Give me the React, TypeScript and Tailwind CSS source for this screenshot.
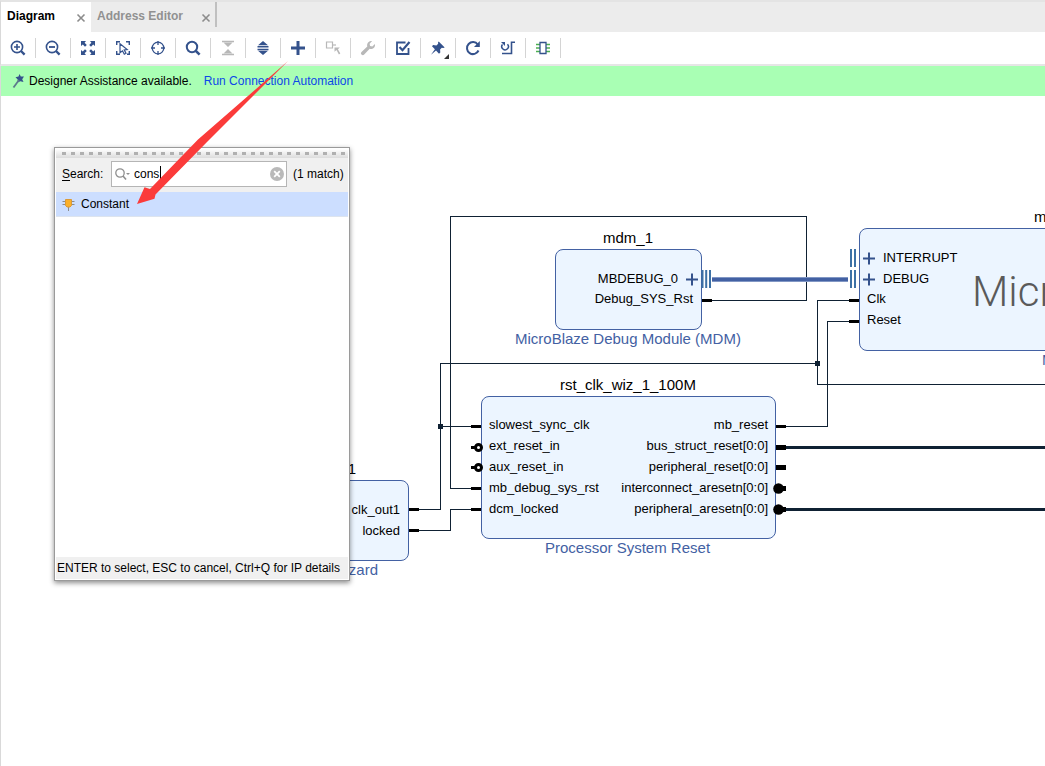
import React from "react";

type IconProps = { children: React.ReactNode };

function Glyph({ children }: IconProps) {
  return (
    <svg width="16" height="16" viewBox="0 0 16 16" fill="none" stroke="currentColor" strokeWidth="2" aria-hidden="true">
      {children}
    </svg>
  );
}

type Tool = { label: string; icon: React.ReactNode; muted?: boolean; menu?: boolean };

const tools: Tool[] = [
  {
    label: "Zoom In",
    icon: (
      <Glyph>
        <circle cx="7" cy="7" r="5.6" strokeWidth="1.6" />
        <path d="M11 11l3.6 3.6" strokeWidth="2.4" />
        <path d="M4 7h6M7 4v6" strokeWidth="1.6" />
      </Glyph>
    ),
  },
  {
    label: "Zoom Out",
    icon: (
      <Glyph>
        <circle cx="7" cy="7" r="5.6" strokeWidth="1.6" />
        <path d="M11 11l3.6 3.6" strokeWidth="2.4" />
        <path d="M4 7h6" strokeWidth="1.8" />
      </Glyph>
    ),
  },
  {
    label: "Zoom Fit",
    icon: (
      <Glyph>
        <path d="M1 1h5L4.6 2.8 6.8 5 5 6.8 2.8 4.6 1 6zM15 1v5l-1.8-1.400L11 6.800 9.200 5l2.200-2.200L10 1zM1 15v-5l1.800 1.400L5 9.200 6.800 11l-2.200 2.200L6 15zM15 15h-5l1.400-1.800L9.200 11 11 9.200l2.200 2.200L15 10z" fill="currentColor" stroke="none" />
      </Glyph>
    ),
  },
  {
    label: "Select Area",
    icon: (
      <Glyph>
        <path d="M1.700 5V1.700H5M11 1.700h3.300V5M1.700 11v3.300H5M14.300 11v3.300H12" strokeWidth="1.4" />
        <path d="M5 3.800l7.200 5.700-3 .4 1.800 3.400-1.700.9-1.800-3.400L5 12.800z" strokeWidth="1.200" />
      </Glyph>
    ),
  },
  {
    label: "Center",
    icon: (
      <Glyph>
        <circle cx="8" cy="8" r="5.800" strokeWidth="1.3" />
        <path d="M8 1v4M8 11v4M1 8h4M11 8h4" strokeWidth="1.300" />
      </Glyph>
    ),
  },
  {
    label: "Search",
    icon: (
      <Glyph>
        <circle cx="7" cy="7" r="5.200" />
        <path d="M10.800 10.800l3.800 3.800" strokeWidth="2.600" />
      </Glyph>
    ),
  },
  {
    label: "Collapse All",
    muted: true,
    icon: (
      <Glyph>
        <path d="M2 1.500h12M2 14.500h12" strokeWidth="1.400" />
        <path d="M3.500 2.500h9L8 7zM3.500 13.500h9L8 9z" fill="currentColor" stroke="none" />
      </Glyph>
    ),
  },
  {
    label: "Expand All",
    icon: (
      <Glyph>
        <path d="M3 5.200l5-4.200L13 5.200zM3 10.800l5 4.200L13 10.800z" fill="currentColor" stroke="none" />
        <path d="M2.500 6.800h11M2.500 9.500h11" strokeWidth="1.600" />
      </Glyph>
    ),
  },
  {
    label: "Add IP",
    icon: (
      <Glyph>
        <path d="M1 8h14M8 1v14" strokeWidth="3" />
      </Glyph>
    ),
  },
  {
    label: "Make External",
    muted: true,
    icon: (
      <Glyph>
        <path d="M1.500 2h6v6h-6z" strokeWidth="1.200" />
        <path d="M8 5h3" strokeWidth="1.200" />
        <path d="M9.500 7.500h5.300l-1.900 1.700 2.400 4.300-1.400.9-2.400-4.400-2 1.700z" fill="currentColor" stroke="none" />
      </Glyph>
    ),
  },
  {
    label: "Customize Block",
    muted: true,
    icon: (
      <Glyph>
        <path d="M14.900 3.900l-2.600 2.500-2.200-.5-.5-2.200 2.500-2.600C10 .5 7.700 2 7.200 4.200c-.2.800-.1 1.500.1 2.200L1.500 11.900c-.8.800-.8 2 0 2.700.8.800 2 .8 2.700 0l5.500-5.800c.7.200 1.400.3 2.200.1C14.100 8.400 15.500 6.100 14.900 3.900z" fill="currentColor" stroke="none" />
      </Glyph>
    ),
  },
  {
    label: "Validate Design",
    icon: (
      <Glyph>
        <path d="M10.500 2.500h-8.500v11.500h11.500v-6" strokeWidth="1.800" />
        <path d="M4.500 7l3 3.200L14.500 2" strokeWidth="2.200" />
      </Glyph>
    ),
  },
  {
    label: "Pin",
    menu: true,
    icon: (
      <Glyph>
        <path d="M8.700 1.500l6 6-1.500.6-1.400-.4-1.700 1.900.2 3-1.300 1.100-3-3.200L1 14.800l3.900-5.600L2 6.300l1.100-1.200 3.300.3L8.200 3.800 8 2.500z" fill="currentColor" stroke="none" />
      </Glyph>
    ),
  },
  {
    label: "Regenerate Layout",
    icon: (
      <Glyph>
        <path d="M12.800 4.500A6 6 0 1 0 13.500 10.500" strokeWidth="2" />
        <path d="M14.800 1v6H9z" fill="currentColor" stroke="none" />
      </Glyph>
    ),
  },
  {
    label: "Optimize Routing",
    icon: (
      <Glyph>
        <path d="M15 2.200h-3.500v11.300H2" strokeWidth="1.600" />
        <path d="M2.500 4.500a3.300 3.300 0 1 0 5-.2" strokeWidth="1.500" />
        <path d="M1 2h4v4z" fill="currentColor" stroke="none" />
      </Glyph>
    ),
  },
  {
    label: "Default View",
    icon: (
      <Glyph>
        <path d="M1 4.500h4M1 8h4M1 11.500h4M11 4.500h4M11 8h4M11 11.500h4" stroke="#4caf50" strokeWidth="1.500" />
        <path d="M5 2.500h6v11H5z" strokeWidth="1.300" />
      </Glyph>
    ),
  },
];

function Tab({ title, active }: { title: string; active?: boolean }) {
  return (
    <div className={active ? "flex w-[90px] items-center justify-between bg-white pl-1.5 pr-[5px]" : "flex w-[124px] items-center justify-between pl-1.5 pr-1"}>
      <button type="button" className={active ? "pb-0.5 font-bold text-black" : "pb-0.5 font-bold text-[#919191]"}>
        {title}
      </button>
      <button type="button" aria-label={`Close ${title}`} className="pt-0.5 text-[#8c8c8c]">
        <svg width="10" height="10" viewBox="0 0 10 10" stroke="currentColor" strokeWidth="1.600" aria-hidden="true">
          <path d="M1.500 1.500l7 7M8.500 1.500l-7 7" />
        </svg>
      </button>
    </div>
  );
}

function SearchPopup() {
  return (
    <section className="absolute left-[54px] top-[51px] flex h-[434px] w-[296px] flex-col border border-[#9a9a9a] bg-white p-px text-[12px] shadow-[0_2px_5px_rgba(0,0,0,0.45)]">
      <div className="flex h-[9px] items-center bg-gradient-to-b from-white to-[#dcdcdc] pl-1.5">
        <svg className="w-full" height="3" aria-hidden="true">
          <path d="M0 1.500H286" stroke="#b0b0b0" strokeWidth="3" strokeDasharray="4 5" />
        </svg>
      </div>
      <div className="flex h-[34px] items-center bg-[#f0f0f0] pb-0.5 pl-1.5 pr-1">
        <label htmlFor="ip-search" className="w-[49px]">
          <span className="underline underline-offset-2">S</span>earch:
        </label>
        <div className="flex h-[26px] w-[176px] items-center border border-[#b5b5b5] bg-white pl-[3px] pr-0.5">
          <svg width="17" height="14" viewBox="0 0 17 14" fill="none" stroke="#8f8f8f" strokeWidth="1.300" aria-hidden="true">
            <circle cx="5" cy="6" r="4.200" />
            <path d="M8 9l3 3.500" strokeWidth="1.600" />
            <path d="M11 6h4l-2 2z" fill="#8f8f8f" stroke="none" />
          </svg>
          <input id="ip-search" defaultValue="cons" className="w-7 bg-transparent pl-0.5 outline-none" />
          <span className="h-4 w-px bg-black" />
          <button type="button" aria-label="Clear search" className="ml-auto">
            <svg width="14" height="14" viewBox="0 0 14 14" aria-hidden="true">
              <circle cx="7" cy="7" r="7" fill="#b9b9b9" />
              <path d="M4.200 4.200l5.600 5.600M9.800 4.200L4.200 9.800" stroke="#fff" strokeWidth="1.800" />
            </svg>
          </button>
        </div>
        <span className="ml-1.5 whitespace-nowrap">(1 match)</span>
      </div>
      <ul className="flex-1">
        <li>
          <button type="button" className="flex h-[25px] w-full items-center gap-1.5 border-b border-[#dde4ee] bg-[#ccdeff] pl-1.5 text-left">
            <svg width="13" height="13" viewBox="0 0 13 13" fill="none" stroke="#8c8c8c" aria-hidden="true">
              <path d="M0.500 3.500h12M0.500 6.500h12M6.500 9v4" />
              <path d="M3.500 1.500h6v6l-1.500 1.500h-3l-1.500-1.500z" fill="#fbb02a" stroke="#d99a3a" />
            </svg>
            Constant
          </button>
        </li>
      </ul>
      <p className="h-[22px] whitespace-nowrap bg-[#f0f0f0] pl-px leading-[22px]">ENTER to select, ESC to cancel, Ctrl+Q for IP details</p>
    </section>
  );
}

const block = "absolute rounded-[8px] border border-[#4361a3] bg-[#ecf5ff]";
const blockName = "absolute whitespace-nowrap text-[15px] leading-[18px] text-black";
const blockKind = "absolute whitespace-nowrap text-[15px] leading-[18px] text-[#4361a3]";

function Ports({ names, className }: { names: string[]; className: string }) {
  return (
    <ul className={className}>
      {names.map((name) => (
        <li key={name} className="h-[21px] whitespace-nowrap leading-[21px]">
          {name}
        </li>
      ))}
    </ul>
  );
}

function Canvas() {
  return (
    <main className="relative min-h-[670px] flex-1 overflow-hidden bg-white text-[13px] text-black shadow-[inset_1px_0_0_#d9d9d9]">
      <div className={`${block} left-[300px] top-[384px] h-[81px] w-[109px]`}>
        <Ports names={["clk_out1", "locked"]} className="pr-2 pt-[18px] text-right" />
      </div>
      <span className={`${blockName} right-[calc(100%-356px)] top-[364px]`}>clk_wiz_1</span>
      <span className={`${blockKind} right-[calc(100%-378px)] top-[465px]`}>Clocking Wizard</span>

      <span className={`${blockName} left-[603px] top-[133px]`}>mdm_1</span>
      <div className={`${block} left-[555px] top-[153px] h-[81px] w-[147px]`}>
        <ul className="pt-[18px] text-right">
          <li className="h-5 pr-[23px] leading-[21px]">MBDEBUG_0</li>
          <li className="h-5 pr-2 leading-[21px]">Debug_SYS_Rst</li>
        </ul>
      </div>
      <span className={`${blockKind} left-[515px] top-[234px]`}>MicroBlaze Debug Module (MDM)</span>

      <span className={`${blockName} left-[560px] top-[280px]`}>rst_clk_wiz_1_100M</span>
      <div className={`${block} left-[481px] top-[300px] flex h-[143px] w-[295px] justify-between px-[7px] pt-[17px]`}>
        <Ports names={["slowest_sync_clk", "ext_reset_in", "aux_reset_in", "mb_debug_sys_rst", "dcm_locked"]} className="" />
        <Ports
          names={["mb_reset", "bus_struct_reset[0:0]", "peripheral_reset[0:0]", "interconnect_aresetn[0:0]", "peripheral_aresetn[0:0]"]}
          className="text-right"
        />
      </div>
      <span className={`${blockKind} left-[545px] top-[443px]`}>Processor System Reset</span>

      <span className={`${blockName} left-[1034px] top-[112px]`}>microblaze_0</span>
      <div className={`${block} left-[859px] top-[132px] h-[123px] w-[370px]`}>
        <Ports names={["INTERRUPT", "DEBUG"]} className="pl-[23px] pt-[18px]" />
        <Ports names={["Clk", "Reset"]} className="-mt-px pl-[7px]" />
        <span className="absolute left-[112px] top-[38px] font-['Roboto'] text-[42px] font-light leading-[50px] text-[#5a5a5a]">MicroBlaze</span>
      </div>
      <span className={`${blockKind} left-[1042px] top-[255px]`}>MicroBlaze</span>

      <svg className="absolute left-0 top-0" width="1600" height="670" viewBox="0 96 1600 670" fill="none" aria-hidden="true">
        <g stroke="#0f2133" shapeRendering="crispEdges">
          <path d="M481 488.500H450.500V216.500H806.500V300.500H702" />
          <path d="M409 509.500H440.500V363.500H817.500M440.500 426.500H481" />
          <path d="M409 530.500H450.500V509.500H481" />
          <path d="M859 300.500H817.500V384.500H1600" />
          <path d="M776 426.500H827.500V321.500H859" />
          <path d="M776 447.500H1600M776 509.500H1600" strokeWidth="3" />
        </g>
        <path d="M438 424h5v5h-5zM815 361h5v5h-5z" fill="#0f2133" />
        <path d="M712 279.500h136" stroke="#8197c4" strokeWidth="5" />
        <path d="M712 279.500h136" stroke="#4361a3" strokeWidth="3" />
        <path d="M702.500 270v18M706.200 270v18M710 270v18M851 249v18M855 249v18M851 270v18M855 270v18" stroke="#3d71a5" strokeWidth="2" />
        <path d="M686 279.500h12M692 273.500v12M863 258.500h12M869 252.500v12M863 279.500h12M869 273.500v12" stroke="#34528c" strokeWidth="2" />
        <g stroke="#000" strokeWidth="3">
          <path d="M702 300.500h10M849 300.500h10M849 321.500h10M409 509.500h10M409 530.500h10M471 426.500h10M471 488.500h10M471 509.500h10M776 426.500h10" />
          <path d="M776 447.500h10M776 467.500h10M776 488.500h10M776 509.500h10" strokeWidth="5" />
          <path d="M471 447.500h5M471 467.500h5" />
        </g>
        <g stroke="#000" strokeWidth="3" fill="#fff">
          <circle cx="478.500" cy="447.500" r="3" />
          <circle cx="478.500" cy="467.500" r="3" />
        </g>
        <circle cx="778.500" cy="488.500" r="5.300" fill="#000" />
        <circle cx="778.500" cy="509.500" r="5.300" fill="#000" />
      </svg>

      <SearchPopup />
    </main>
  );
}

export default function App() {
  return (
    <div className="relative flex min-h-screen flex-col overflow-hidden bg-white font-['Liberation_Sans',sans-serif] text-[12px] text-black">
      <nav className="flex h-8 border-l border-t-2 border-l-[#d9d9d9] border-t-[#e4e4e4] bg-[#ececec]" aria-label="Views">
        <Tab title="Diagram" active />
        <Tab title="Address Editor" />
        <span className="h-[25px] w-0.5 bg-[#c0c0c0]" />
      </nav>
      <div className="flex h-[34px] items-center border-b-2 border-l border-b-[#e6e6e6] border-l-[#d9d9d9] bg-white" role="toolbar" aria-label="Diagram tools">
        {tools.map((tool) => (
          <button
            key={tool.label}
            type="button"
            aria-label={tool.label}
            className={`relative flex h-5 w-[35px] items-center justify-center border-r border-[#d4d4d4] ${tool.muted ? "text-[#b8b8b8]" : "text-[#34528c]"}`}
          >
            {tool.icon}
            {tool.menu && (
              <svg className="absolute -bottom-px right-1.5" width="5" height="5" viewBox="0 0 5 5" aria-hidden="true">
                <path d="M5 0v5H0z" fill="#333" />
              </svg>
            )}
          </button>
        ))}
      </div>
      <div className="flex h-[30px] items-center border-l border-[#d9d9d9] bg-[#a9ffb4] pl-[10px]">
        <svg width="14" height="16" viewBox="0 0 14 16" aria-hidden="true">
          <path d="M8.500 1l1.300 2.600L13 3.500l-1.800 2.700L12.500 9 9.300 8.200 6.500 9.500l.2-3L4.500 4.200l3-.6z" fill="#34528c" />
          <path d="M8 7L2.500 14.500" stroke="#5d7a8c" strokeWidth="1.800" />
        </svg>
        <span className="ml-1">Designer Assistance available.</span>
        <a href="#automation" className="ml-3 text-[#0d47e8]">
          Run Connection Automation
        </a>
      </div>
      <Canvas />
      <svg className="pointer-events-none absolute left-0 top-0" width="300" height="220" viewBox="0 0 300 220" aria-hidden="true">
        <path d="M288 61L198 139.500 150 189 144.500 187.300 137 204 154.500 198.700 155.500 194.500 207 142z" fill="#fb3b3a" />
      </svg>
    </div>
  );
}
